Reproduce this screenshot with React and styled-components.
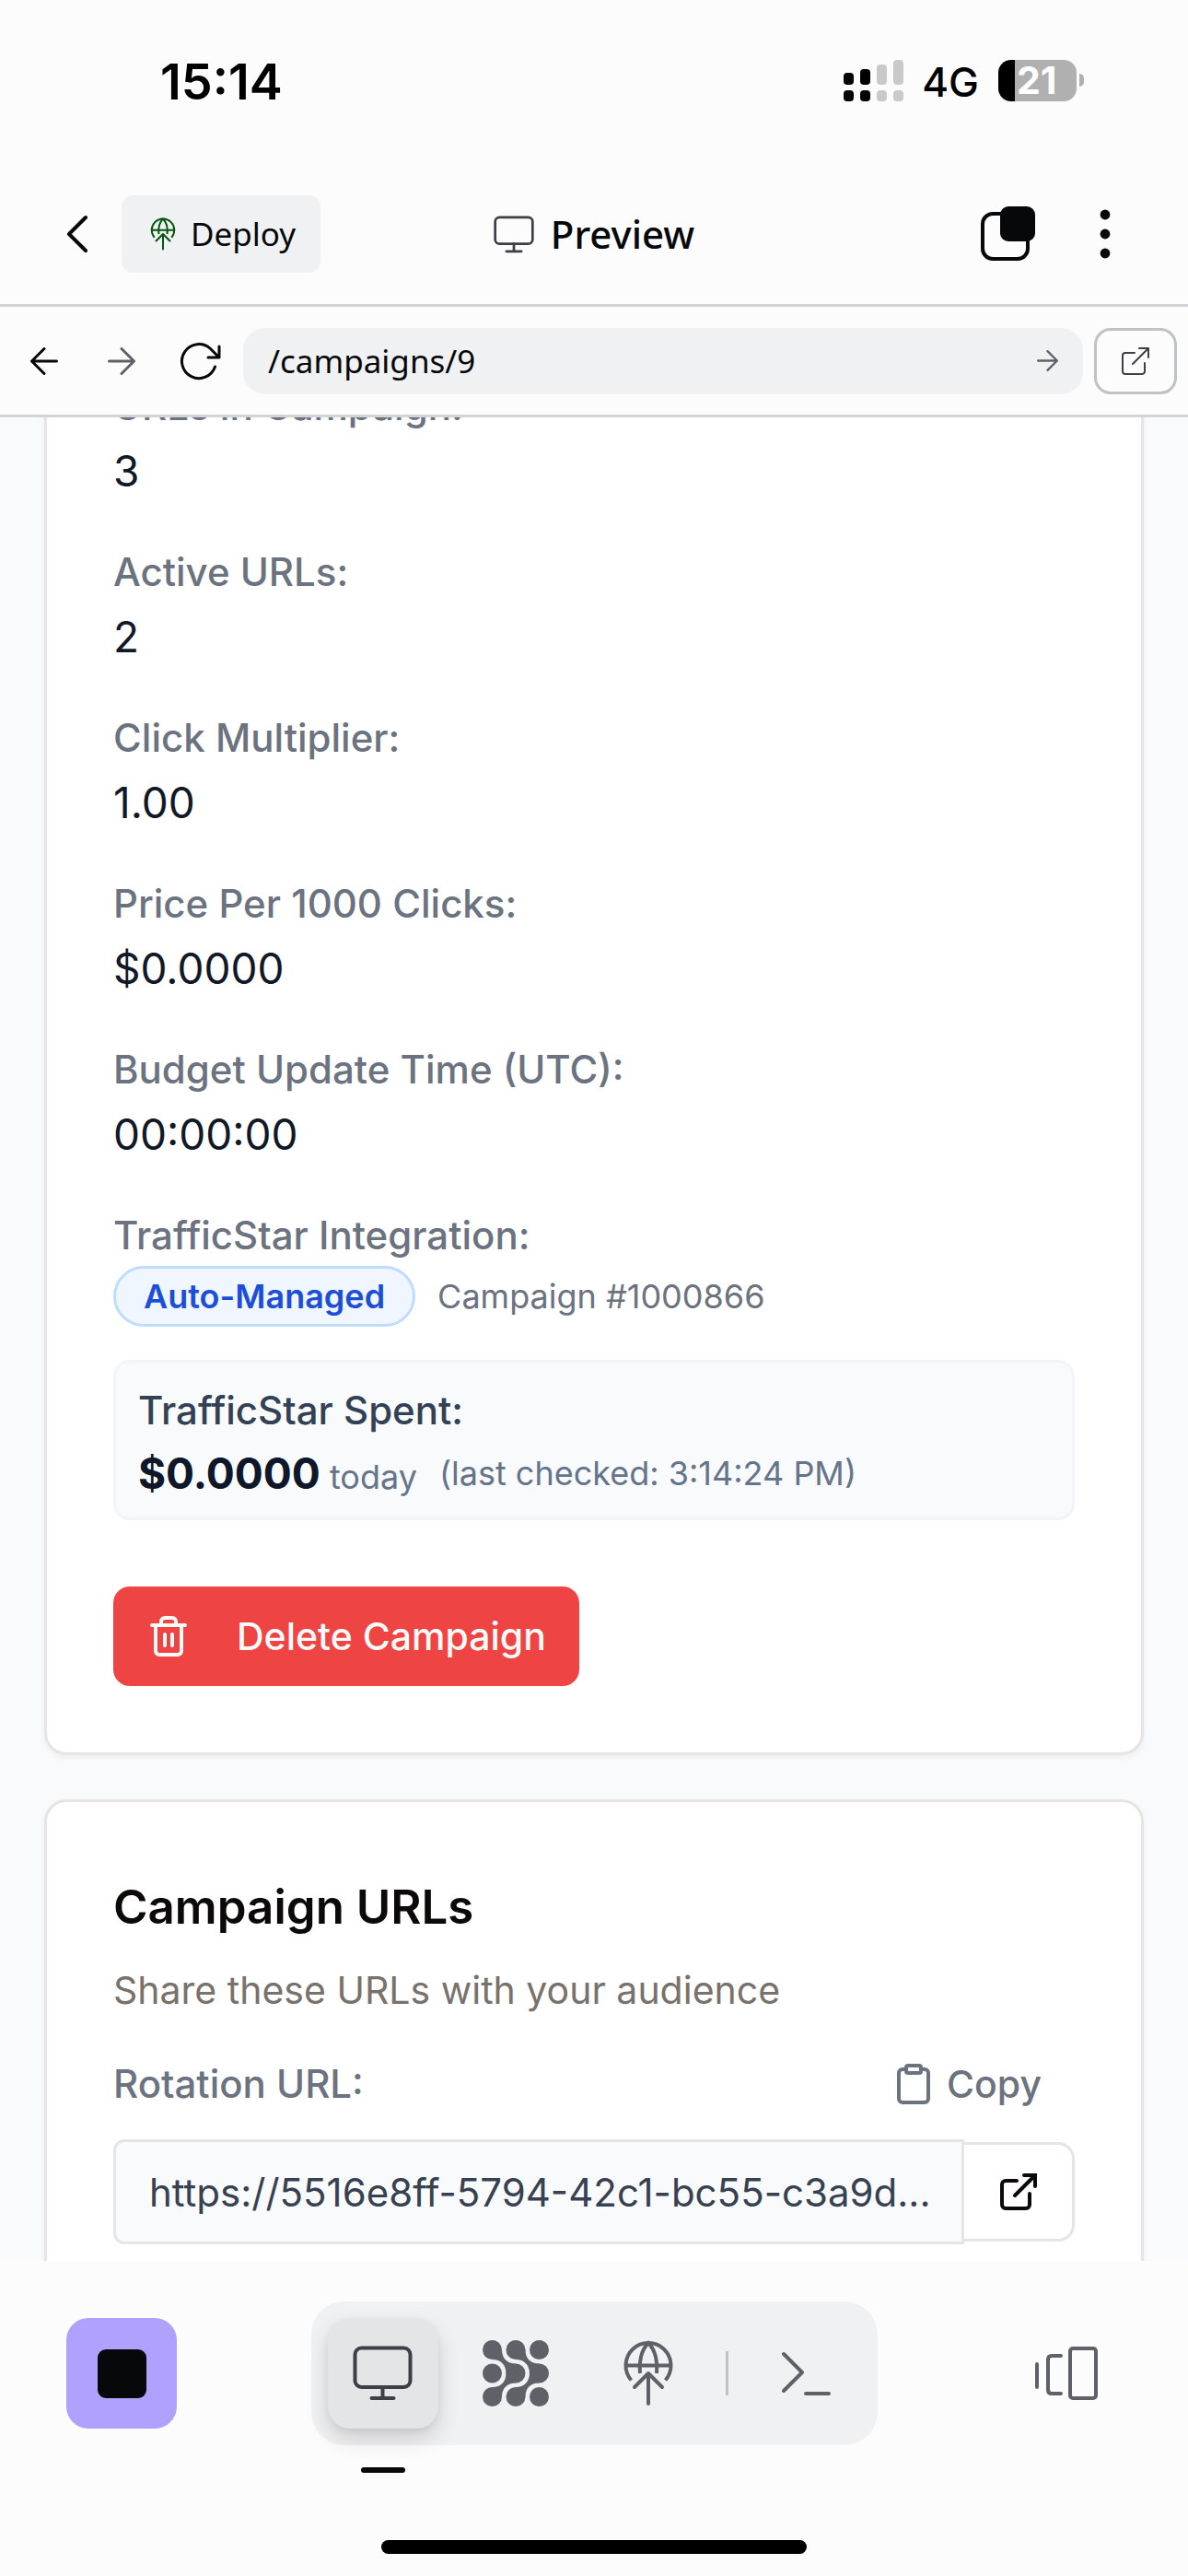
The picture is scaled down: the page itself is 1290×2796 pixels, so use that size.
import React from 'react';
import styled, { createGlobalStyle, css } from 'styled-components';
import { Trash2, Clipboard, ExternalLink } from 'lucide-react';

const ui = "'Inter', 'Liberation Sans', sans-serif";
const chrome = "'Noto Sans', 'Liberation Sans', sans-serif";

const Global = createGlobalStyle`
  *, *::before, *::after { box-sizing: border-box; }
  body { margin: 0; background: #fcfcfc; font-family: ${ui}; color: #07080a; }
  button, input { font: inherit; color: inherit; margin: 0; }
  svg { display: block; flex: none; }
`;

const Screen = styled.div`
  display: flex;
  flex-direction: column;
  height: 100vh;
  overflow: hidden;
  background: #fcfcfc;
`;

const bare = css`
  display: flex;
  align-items: center;
  justify-content: center;
  padding: 0;
  border: 0;
  background: transparent;
`;

/* Status bar */
const StatusBar = styled.div`
  flex: none;
  display: flex;
  align-items: center;
  justify-content: space-between;
  height: 174px;
  padding: 0 113px 0 174px;
  color: #000;
`;
const Clock = styled.div`
  padding-top: 3px;
  font-size: 54px;
  line-height: 60px;
  font-weight: 600;
`;
const StatusRight = styled.div`
  display: flex;
  align-items: center;
`;
const Network = styled.span`
  padding: 3px 21px 0 20px;
  font-size: 44px;
  line-height: 48px;
  font-weight: 500;
`;
const Battery = styled.div`
  display: flex;
  align-items: center;
  gap: 3px;
`;
const BatteryBody = styled.div`
  display: flex;
  align-items: center;
  width: 85px;
  height: 45px;
  padding-left: 20px;
  border-radius: 14px;
  background: linear-gradient(to right, #000 18px, #b0b0b0 18px);
  color: #fff;
  font-size: 41px;
  line-height: 45px;
  font-weight: 700;
`;
const BatteryTip = styled.div`
  width: 5px;
  height: 14px;
  border-radius: 0 5px 5px 0;
  background: #b0b0b0;
`;

/* App header */
const Header = styled.header`
  flex: none;
  display: grid;
  grid-template-columns: 1fr auto 1fr;
  align-items: center;
  height: 159px;
  padding: 4px 48px 0;
  border-bottom: 3px solid #d3d4d5;
`;
const HeaderStart = styled.div`
  display: flex;
  align-items: center;
`;
const HeaderEnd = styled.div`
  display: flex;
  align-items: center;
  justify-content: flex-end;
  gap: 21px;
`;
const IconButton = styled.button`
  ${bare}
  width: ${(p) => p.$w}px;
  height: ${(p) => p.$w}px;
  color: ${(p) => p.$color || '#07080a'};
`;
const DeployButton = styled.button`
  ${bare}
  gap: 12px;
  height: 84px;
  padding: 0 27px;
  border-radius: 12px;
  background: #f0f1f3;
  font-family: ${chrome};
  font-size: 35px;
  line-height: 48px;
`;
const Title = styled.h1`
  display: flex;
  align-items: center;
  gap: 18px;
  margin: 0;
  font-family: ${chrome};
  font-size: 42px;
  line-height: 60px;
  font-weight: 500;

  svg { color: #3c3f46; }
`;

/* Browser bar */
const BrowserBar = styled.form`
  flex: none;
  display: flex;
  align-items: center;
  height: 120px;
  padding: 0 12px 0 6px;
  border-bottom: 3px solid #d3d4d5;
`;
const PathField = styled.div`
  flex: 1;
  min-width: 0;
  display: flex;
  align-items: center;
  height: 72px;
  margin: 0 12px 0 6px;
  padding: 0 6px 0 27px;
  border-radius: 24px;
  background: #f0f1f3;
`;
const PathInput = styled.input`
  flex: 1;
  min-width: 0;
  padding: 0;
  border: 0;
  outline: 0;
  background: transparent;
  font-family: ${chrome};
  font-size: 35px;
  line-height: 60px;
`;
const OpenButton = styled.button`
  ${bare}
  width: 90px;
  height: 72px;
  border: 3px solid #bfc3c3;
  border-radius: 18px;
  color: #3c3f46;
`;

/* Page */
const Page = styled.main`
  flex: 1;
  min-height: 0;
  overflow: hidden;
  display: flex;
  flex-direction: column;
  justify-content: flex-end;
  gap: 48px;
  padding: 0 48px;
  background: #f8fafc;
`;
const Card = styled.section`
  flex: none;
  padding: 72px;
  border: 3px solid #e7e5e4;
  border-radius: 24px;
  background: #fff;
  box-shadow: 0 3px 6px rgba(0, 0, 0, 0.05);
`;
const ClippedCard = styled(Card)`
  padding-bottom: 18px;
  border-bottom: 0;
  border-radius: 24px 24px 0 0;
`;
const Stats = styled.dl`
  display: flex;
  flex-direction: column;
  gap: 48px;
  margin: 0;
`;
const Label = styled.dt`
  color: #6b7280;
  font-size: 42px;
  line-height: 60px;
  font-weight: 500;
`;
const Value = styled.dd`
  margin: 0;
  padding-top: 8px;
  color: #111827;
  font-size: 46px;
  line-height: 64px;
`;
const BadgeRow = styled.dd`
  display: flex;
  align-items: center;
  gap: 24px;
  margin: 3px 0 0;
`;
const Badge = styled.span`
  padding: 6px 30px;
  border: 3px solid #bfdbfe;
  border-radius: 33px;
  background: #eff6ff;
  color: #1d4ed8;
  font-size: 36px;
  line-height: 48px;
  font-weight: 600;
`;
const Muted = styled.span`
  color: ${(p) => p.$color || '#6b7280'};
  font-size: 36px;
  line-height: 48px;
`;
const Spent = styled.div`
  margin-top: 36px;
  padding: 24px;
  border: 3px solid #f1f5f9;
  border-radius: 18px;
  background: #f8fafc;
`;
const SpentTitle = styled.div`
  color: #334155;
  font-size: 42px;
  line-height: 56px;
  font-weight: 500;
`;
const SpentRow = styled.div`
  display: flex;
  align-items: center;
  gap: 24px;
  height: 64px;
  padding-top: 16px;
`;
const Amount = styled.span`
  display: inline-flex;
  align-items: baseline;
  gap: 10px;
  color: #0f172a;
  font-size: 46px;
  line-height: 60px;
  font-weight: 700;
`;
const Today = styled(Muted)`
  font-weight: 400;
`;
const DeleteButton = styled.button`
  ${bare}
  gap: 50px;
  height: 108px;
  margin-top: 72px;
  padding: 0 36px;
  border-radius: 18px;
  background: #ef4444;
  color: #fafaf9;
  font-size: 41px;
  line-height: 60px;
  font-weight: 500;
`;
const CardTitle = styled.h2`
  margin: 0;
  color: #0c0a09;
  font-size: 51px;
  line-height: 84px;
  font-weight: 600;
`;
const Subtitle = styled.p`
  margin: 18px 0 0;
  color: #78716c;
  font-size: 41px;
  line-height: 60px;
`;
const UrlHead = styled.div`
  display: flex;
  align-items: center;
  justify-content: space-between;
  height: 132px;
  padding-top: 12px;
`;
const UrlLabel = styled.label`
  color: #6b7280;
  font-size: 42px;
  line-height: 60px;
  font-weight: 500;
`;
const CopyButton = styled.button`
  ${bare}
  gap: 12px;
  padding: 0 36px;
  color: #6b7280;
  font-size: 41px;
  line-height: 60px;
  font-weight: 500;
`;
const UrlRow = styled.div`
  display: flex;
  align-items: center;
`;
const UrlInput = styled.input`
  flex: 1;
  min-width: 0;
  height: 114px;
  padding: 0 24px 0 36px;
  border: 3px solid #e5e5e5;
  border-radius: 12px 0 0 12px;
  outline: 0;
  background: #f9fafb;
  color: #374151;
  font-size: 42px;
`;
const UrlOpen = styled.button`
  ${bare}
  width: 120px;
  height: 108px;
  border: 3px solid #e7e5e4;
  border-left: 0;
  border-radius: 0 18px 18px 0;
  background: #fff;
  color: #0c0a09;
`;

/* Bottom dock */
const Dock = styled.footer`
  flex: none;
  display: flex;
  flex-direction: column;
  align-items: center;
  justify-content: space-between;
  height: 342px;
  padding: 44px 72px 24px;
`;
const DockRow = styled.div`
  display: grid;
  grid-template-columns: 1fr auto 1fr;
  align-items: center;
  width: 100%;
`;
const StopButton = styled.button`
  ${bare}
  width: 120px;
  height: 120px;
  border-radius: 24px;
  background: #b1a1ff;
`;
const StopMark = styled.span`
  width: 53px;
  height: 53px;
  border-radius: 9px;
  background: #07080a;
`;
const Tabs = styled.nav`
  display: flex;
  align-items: center;
  gap: 24px;
  padding: 18px;
  border-radius: 36px;
  background: #f0f1f3;
`;
const Tab = styled.button`
  ${bare}
  position: relative;
  width: 120px;
  height: 120px;
  border-radius: 24px;
  color: #5f6168;
  ${(p) =>
    p.$active &&
    css`
      background: #e4e5e7;
      color: #3c3f46;
      box-shadow: 0 12px 24px rgba(0, 0, 0, 0.14), 0 3px 9px rgba(0, 0, 0, 0.06);
      &::after {
        content: '';
        position: absolute;
        left: 36px;
        bottom: -48px;
        width: 48px;
        height: 6px;
        border-radius: 3px;
        background: #07080a;
      }
    `}
`;
const Divider = styled.span`
  width: 3px;
  height: 48px;
  background: #c0c1c4;
`;
const DockEnd = styled.div`
  display: flex;
  justify-content: flex-end;
`;
const HomeBar = styled.div`
  width: 462px;
  height: 15px;
  border-radius: 8px;
  background: #000;
`;

const Stroke = ({ w, h, sw, children, ...rest }) => (
  <svg width={w} height={h} viewBox={`0 0 ${w} ${h}`} fill="none" stroke="currentColor"
    strokeWidth={sw} strokeLinecap="round" strokeLinejoin="round" aria-hidden="true" {...rest}>
    {children}
  </svg>
);

const Signal = () => (
  <svg width="65" height="45" viewBox="0 0 65 45" aria-hidden="true">
    {[14, 10, 5, 0].map((top, i) => (
      <g key={top} fill={i < 2 ? '#000' : '#c9c9c9'}>
        <rect x={i * 18} y={top} width="11" height={27 - top} rx="4" />
        <rect x={i * 18} y="33" width="11" height="12" rx="4" />
      </g>
    ))}
  </svg>
);

const GlobeUp = ({ size = 72, color }) => (
  <svg width={size} height={size} viewBox="0 0 72 72" fill="none" stroke={color || 'currentColor'}
    strokeWidth="4" strokeLinecap="butt" aria-hidden="true">
    <path d="M17.5 43.5A24.5 24.5 0 1 1 54.5 43.5" />
    <path d="M11.5 27.5H60.5" />
    <path d="M27 36C25.5 25 28 11 36 3C44 11 46.5 25 45 36" />
    <path d="M36 69V37M21 51L36 36L51 51" strokeLinecap="round" strokeLinejoin="round" />
  </svg>
);

const Monitor = ({ w = 65, h = 60 }) => (
  <svg width={w} height={h} viewBox="0 0 65 60" fill="none" stroke="currentColor" strokeWidth="4"
    strokeLinecap="round" aria-hidden="true">
    <rect x="2.5" y="2.5" width="60" height="42.5" rx="7" />
    <path d="M32.5 45V56M20.5 57H44.5" />
  </svg>
);

const ArrowRight = ({ size = 30 }) => (
  <Stroke w={size} h={size} sw={3} viewBox="0 0 30 30">
    <path d="M1.5 15H28.5M15 1.5L28.5 15L15 28.5" />
  </Stroke>
);

const Blobs = () => (
  <svg width="72" height="72" viewBox="0 0 72 72" fill="currentColor" aria-hidden="true">
    {[10.5, 36, 61.5].map((y) => [10.5, 36, 61.5].map((x) => (
      <circle key={`${x}-${y}`} cx={x} cy={y} r="10.5" />
    )))}
    <path d="M21 10.5C21 20 27 25.5 36 25.5V46.5C27 46.5 21 52 21 61.5L10.5 51C20 51 25.5 45 25.5 36C25.5 27 20 21 10.5 21Z" />
    <path d="M46.5 10.5C46.5 20 52 25.5 61.5 25.5V46.5C52 46.5 46.5 52 46.5 61.5L36 51C45 51 51 45 51 36C51 27 45 21 36 21Z" />
  </svg>
);

const stats = [
  ['URLs in Campaign:', '3'],
  ['Active URLs:', '2'],
  ['Click Multiplier:', '1.00'],
  ['Price Per 1000 Clicks:', '$0.0000'],
  ['Budget Update Time (UTC):', '00:00:00'],
];

export default function App() {
  return (
    <Screen>
      <Global />
      <StatusBar>
        <Clock>15:14</Clock>
        <StatusRight>
          <Signal />
          <Network>4G</Network>
          <Battery>
            <BatteryBody>21</BatteryBody>
            <BatteryTip />
          </Battery>
        </StatusRight>
      </StatusBar>

      <Header>
        <HeaderStart>
          <IconButton $w={84} aria-label="Back">
            <Stroke w={36} h={42} sw={4}><path d="M21 3L3 21L21 39" /></Stroke>
          </IconButton>
          <DeployButton>
            <GlobeUp size={36} color="#05560f" />
            Deploy
          </DeployButton>
        </HeaderStart>
        <Title>
          <Monitor w={44} h={41} />
          Preview
        </Title>
        <HeaderEnd>
          <IconButton $w={84} aria-label="Windows">
            <svg width="60" height="60" viewBox="0 0 60 60" aria-hidden="true">
              <rect x="2" y="8" width="49" height="49" rx="11" fill="none" stroke="currentColor" strokeWidth="4" />
              <rect x="21" y="0" width="38" height="38" rx="9" fill="currentColor" />
            </svg>
          </IconButton>
          <IconButton $w={84} aria-label="More">
            <svg width="12" height="54" viewBox="0 0 12 54" fill="currentColor" aria-hidden="true">
              <circle cx="6" cy="6" r="5.4" /><circle cx="6" cy="27" r="5.4" /><circle cx="6" cy="48" r="5.4" />
            </svg>
          </IconButton>
        </HeaderEnd>
      </Header>

      <BrowserBar onSubmit={(e) => e.preventDefault()}>
        <IconButton type="button" $w={84} aria-label="Go back">
          <Stroke w={30} h={30} sw={3}><path d="M28.5 15H1.5M15 1.5L1.5 15L15 28.5" /></Stroke>
        </IconButton>
        <IconButton type="button" $w={84} $color="#5f6168" aria-label="Go forward"><ArrowRight /></IconButton>
        <IconButton type="button" $w={84} aria-label="Reload">
          <Stroke w={48} h={42} sw={3}>
            <path d="M41.5 27A18.5 18.5 0 1 1 36.5 7.5L46 17M46 5V17H34" />
          </Stroke>
        </IconButton>
        <PathField>
          <PathInput aria-label="Path" defaultValue="/campaigns/9" />
          <IconButton $w={66} $color="#5f6168" aria-label="Go"><ArrowRight size={23} /></IconButton>
        </PathField>
        <OpenButton type="button" aria-label="Open in new tab">
          <Stroke w={30} h={30} sw={2}>
            <path d="M14 6H4Q1 6 1 9V26Q1 29 4 29H21Q25 29 25 26V17M12 18L29 1M19 1H29V11" />
          </Stroke>
        </OpenButton>
      </BrowserBar>

      <Page>
        <Card>
          <Stats>
            {stats.map(([label, value]) => (
              <div key={label}>
                <Label>{label}</Label>
                <Value>{value}</Value>
              </div>
            ))}
            <div>
              <Label>TrafficStar Integration:</Label>
              <BadgeRow>
                <Badge>Auto-Managed</Badge>
                <Muted>Campaign #1000866</Muted>
              </BadgeRow>
            </div>
          </Stats>
          <Spent>
            <SpentTitle>TrafficStar Spent:</SpentTitle>
            <SpentRow>
              <Amount>$0.0000 <Today $color="#64748b">today</Today></Amount>
              <Muted $color="#64748b">(last checked: 3:14:24 PM)</Muted>
            </SpentRow>
          </Spent>
          <DeleteButton>
            <Trash2 size={48} />
            Delete Campaign
          </DeleteButton>
        </Card>

        <ClippedCard>
          <CardTitle>Campaign URLs</CardTitle>
          <Subtitle>Share these URLs with your audience</Subtitle>
          <UrlHead>
            <UrlLabel htmlFor="rotation-url">Rotation URL:</UrlLabel>
            <CopyButton><Clipboard size={48} />Copy</CopyButton>
          </UrlHead>
          <UrlRow>
            <UrlInput id="rotation-url" readOnly value="https://5516e8ff-5794-42c1-bc55-c3a9d..." />
            <UrlOpen aria-label="Open rotation URL">
              <ExternalLink size={48} strokeLinejoin="miter" />
            </UrlOpen>
          </UrlRow>
        </ClippedCard>
      </Page>

      <Dock>
        <DockRow>
          <StopButton aria-label="Stop"><StopMark /></StopButton>
          <Tabs>
            <Tab $active aria-label="Preview"><Monitor /></Tab>
            <Tab aria-label="Agent"><Blobs /></Tab>
            <Tab aria-label="Deployments"><GlobeUp /></Tab>
            <Divider />
            <Tab aria-label="Console">
              <Stroke w={54} h={48} sw={4}><path d="M3 3L23 23L3 43M27 46H52" /></Stroke>
            </Tab>
          </Tabs>
          <DockEnd>
            <IconButton $w={120} $color="#5f6168" aria-label="Panels">
              <Stroke w={68} h={58} sw={4}>
                <path d="M2 19V44M28 10H18Q14 10 14 14V47Q14 51 18 51H28" />
                <rect x="38" y="2" width="28" height="54" rx="3" />
              </Stroke>
            </IconButton>
          </DockEnd>
        </DockRow>
        <HomeBar />
      </Dock>
    </Screen>
  );
}
